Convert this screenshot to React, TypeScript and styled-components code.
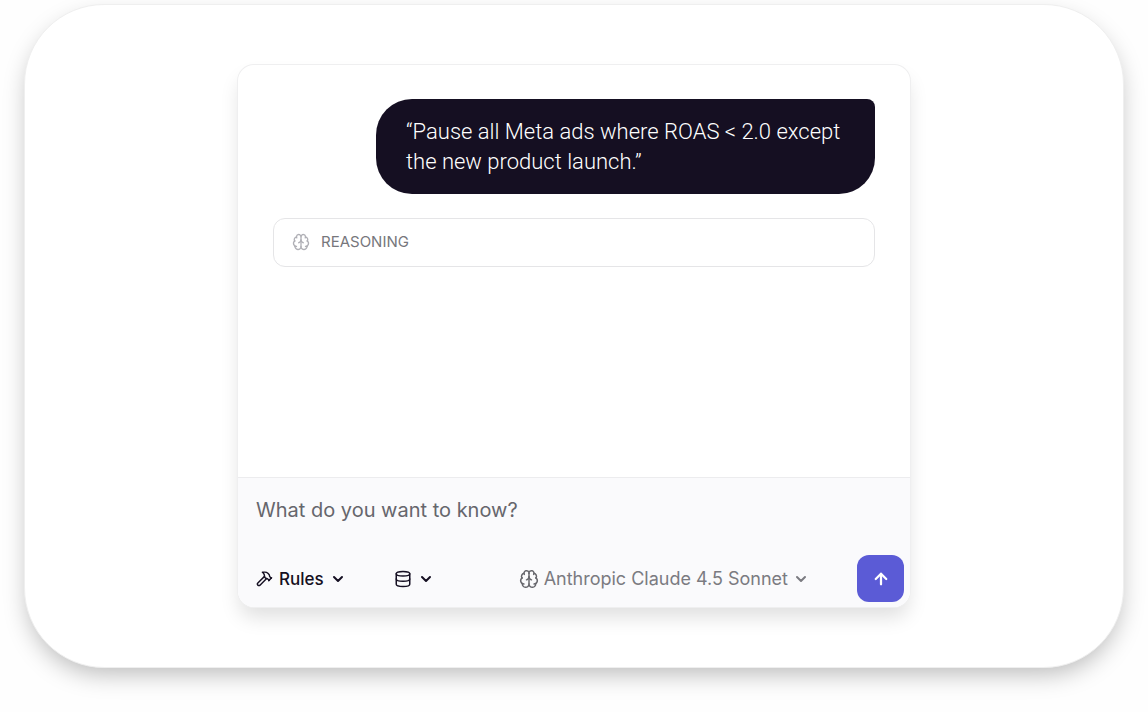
import React from "react";
import styled, { createGlobalStyle } from "styled-components";
import { ArrowUp, Brain, ChevronDown, Database, Hammer } from "lucide-react";

const GlobalStyle = createGlobalStyle`
  *, *::before, *::after { box-sizing: border-box; }
  body {
    margin: 0;
    background: #fefefe;
    font-family: Inter, "Liberation Sans", sans-serif;
  }
  button, input { font: inherit; }
`;

const Page = styled.main`
  padding: 4px 24px 44px;
`;

const Stage = styled.section`
  display: flex;
  justify-content: center;
  padding: 60px 24px;
  background: #ffffff;
  border: 1px solid #efefef;
  border-radius: 80px;
  box-shadow: 0 10px 24px -4px rgba(0, 0, 0, 0.27);
`;

const Chat = styled.article`
  display: flex;
  flex-direction: column;
  width: 100%;
  max-width: 672px;
  overflow: hidden;
  background: #ffffff;
  border-radius: 16px;
  box-shadow: 0 0 0 1px #efeff0, 0 12px 20px -2px rgba(0, 0, 0, 0.13);
`;

const Messages = styled.div`
  display: flex;
  flex-direction: column;
  gap: 24px;
  min-height: 412px;
  padding: 34px 35px;
`;

const Bubble = styled.p`
  align-self: flex-end;
  max-width: 499px;
  margin: 0;
  padding: 18px 28px 17px 30px;
  border-radius: 36px 8px 36px 36px;
  background: #150f22;
  color: #ffffff;
  font-family: Roboto, Inter, sans-serif;
  font-size: 22px;
  font-weight: 300;
  line-height: 30px;
`;

const Reasoning = styled.button`
  display: flex;
  align-items: center;
  gap: 11px;
  width: 100%;
  height: 49px;
  padding: 0 18px 2px;
  border: 1px solid #e5e5e7;
  border-radius: 12px;
  background: #ffffff;
  color: #77777c;
  font-size: 15px;
`;

const Composer = styled.form`
  display: flex;
  flex-direction: column;
  gap: 28px;
  padding: 15px 6px 5px 18px;
  border-top: 1px solid #ececee;
  background: #fafafc;
`;

const Prompt = styled.input`
  width: 100%;
  height: 34px;
  padding: 0;
  border: 0;
  outline: 0;
  background: transparent;
  color: #150f22;
  font-size: 20px;
  &::placeholder { color: #66666c; opacity: 1; }
`;

const Toolbar = styled.div`
  display: flex;
  align-items: center;
`;

const Picker = styled.button<{ $muted?: boolean }>`
  display: flex;
  align-items: center;
  gap: ${(p) => (p.$muted ? "5px" : "6px")};
  padding: 0;
  border: 0;
  background: transparent;
  color: ${(p) => (p.$muted ? "#7b7b81" : "#150f22")};
  font-size: ${(p) => (p.$muted ? "18px" : "17px")};
  font-weight: ${(p) => (p.$muted ? 400 : 500)};
`;

const Tools = styled.div`
  display: flex;
  gap: 48px;
`;

const Right = styled.div`
  display: flex;
  align-items: center;
  gap: 48px;
  margin-left: auto;
`;

const Send = styled.button`
  display: grid;
  place-items: center;
  width: 47px;
  height: 47px;
  padding: 0;
  border: 0;
  border-radius: 12px;
  background: #5b5bd6;
  color: #ffffff;
`;

export default function App() {
  return (
    <>
      <GlobalStyle />
      <Page>
        <Stage>
          <Chat>
            <Messages>
              <Bubble>“Pause all Meta ads where ROAS &lt; 2.0 except the new product launch.”</Bubble>
              <Reasoning type="button">
                <Brain size={18} strokeWidth={1.75} color="#b0b0b6" />
                REASONING
              </Reasoning>
            </Messages>
            <Composer onSubmit={(e) => e.preventDefault()}>
              <Prompt aria-label="Question" placeholder="What do you want to know?" />
              <Toolbar>
                <Tools>
                  <Picker type="button">
                    <Hammer size={17} />
                    Rules
                    <ChevronDown size={16} strokeWidth={3} />
                  </Picker>
                  <Picker type="button" aria-label="Data sources">
                    <Database size={18} />
                    <ChevronDown size={16} strokeWidth={3} />
                  </Picker>
                </Tools>
                <Right>
                  <Picker type="button" $muted>
                    <Brain size={20} strokeWidth={1.75} color="#66666c" />
                    Anthropic Claude 4.5 Sonnet
                    <ChevronDown size={16} strokeWidth={3} />
                  </Picker>
                  <Send type="submit" aria-label="Send">
                    <ArrowUp size={18} strokeWidth={3} />
                  </Send>
                </Right>
              </Toolbar>
            </Composer>
          </Chat>
        </Stage>
      </Page>
    </>
  );
}
